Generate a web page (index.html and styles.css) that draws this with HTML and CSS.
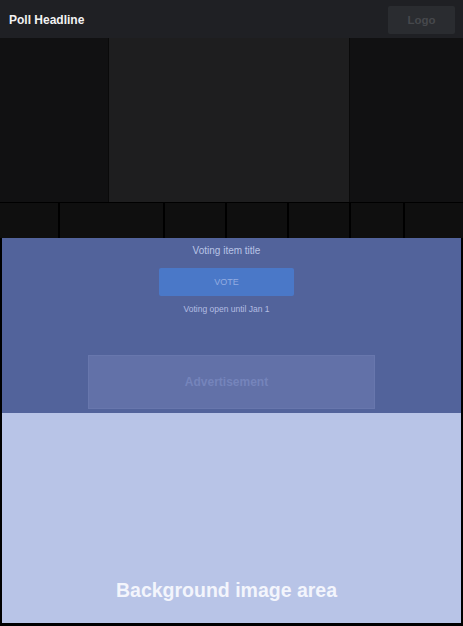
FILE: index.html
```html
<!DOCTYPE html>
<html lang="en">
<head>
    <meta charset="UTF-8">
    <meta name="viewport" content="width=device-width, initial-scale=1.0">
    <title>Poll</title>
    <link rel="stylesheet" href="styles.css">
</head>
<body>

    <!-- Top bar -->
    <header class="top-bar">
        <h1>Poll Headline</h1>
        <div class="logo">Logo</div>
    </header>

    <!-- Video stage -->
    <div class="stage">
        <div class="side"></div>
        <div class="main-view"></div>
        <div class="side right"></div>
    </div>

    <!-- Thumbnail strip -->
    <div class="thumbs">
        <div class="thumb w58"></div>
        <div class="thumb w103"></div>
        <div class="thumb w60"></div>
        <div class="thumb w60"></div>
        <div class="thumb w60"></div>
        <div class="thumb w52"></div>
        <div class="thumb grow"></div>
    </div>

    <div class="frame">
        <!-- Voting panel -->
        <section class="vote-panel">
            <div class="vote-box">
                <p class="item-title">Voting item title</p>
                <button class="vote-btn">VOTE</button>
                <p class="vote-note">Voting open until Jan 1</p>
            </div>
            <div class="ad"><span class="ad-label">Advertisement</span></div>
        </section>

        <!-- Background -->
        <section class="bg-area">
            <p>Background image area</p>
        </section>
    </div>

</body>
</html>
```

FILE: styles.css
```css
body {
    margin: 0;
    background-color: #000;
    font-family: "Liberation Sans", Arial, sans-serif;
    width: 463px;
    height: 626px;
    overflow: hidden;
}
.top-bar {
    height: 38px;
    background-color: #1f2024;
    display: flex;
    align-items: center;
    justify-content: space-between;
    padding: 0 8px 0 9px;
}
.top-bar h1 {
    margin: 2px 0 0;
    font-size: 12px;
    font-weight: bold;
    color: #f2f2f2;
}
.logo {
    width: 67px;
    height: 28px;
    margin-top: 1px;
    background-color: #2a2c30;
    border-radius: 2px;
    color: #46484c;
    font-size: 11.5px;
    font-weight: bold;
    display: flex;
    align-items: center;
    justify-content: center;
}
.stage {
    height: 164px;
    display: flex;
    gap: 1px;
    background-color: #0a0a0a;
    border-bottom: 1px solid #000;
}
.side {
    width: 108px;
    background-color: #111112;
}
.side.right {
    width: 113px;
}
.main-view {
    flex: 1;
    background-color: #1e1e1f;
}
.thumbs {
    height: 35px;
    display: flex;
    gap: 2px;
    background-color: #000;
}
.thumb {
    background-color: #0f0f0f;
}
.w58 { width: 58px; }
.w103 { width: 103px; }
.w60 { width: 60px; }
.w52 { width: 52px; }
.grow { flex: 1; }
.frame {
    padding: 0 2px 2px;
    height: 385px;
    display: flex;
    flex-direction: column;
}
.vote-panel {
    height: 175px;
    background-color: #52639b;
    display: flex;
    flex-direction: column;
    align-items: center;
}
.vote-box {
    display: flex;
    flex-direction: column;
    align-items: center;
    margin-right: 10px;
}
.item-title {
    margin: 7px 0 0;
    font-size: 10px;
    color: #b9c4e6;
}
.vote-btn {
    margin-top: 12px;
    width: 135px;
    height: 28px;
    border: none;
    border-radius: 2px;
    background-color: #4a78c8;
    color: #93ace2;
    font-family: inherit;
    font-size: 9px;
}
.vote-note {
    margin: 8px 0 0;
    font-size: 8.5px;
    color: #b2bde2;
}
.ad {
    margin-top: 41px;
    width: 285px;
    height: 52px;
    background-color: #6271a8;
    border: 1px solid #6877ad;
    color: #7584bb;
    font-size: 12px;
    font-weight: bold;
    display: flex;
    align-items: center;
    justify-content: center;
}
.ad-label {
    margin-right: 10px;
}
.bg-area {
    flex: 1;
    background-color: #b8c4e7;
    display: flex;
    align-items: flex-end;
    justify-content: center;
}
.bg-area p {
    margin: 0 10px 21px 0;
    font-size: 19.5px;
    font-weight: bold;
    color: #f3f5fc;
}
```
